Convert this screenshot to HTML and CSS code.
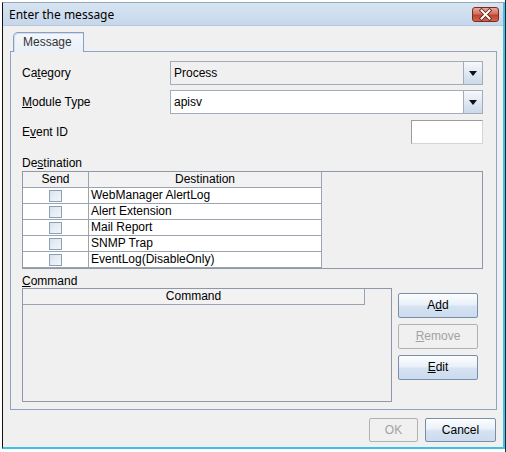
FILE: index.html
```html
<!DOCTYPE html>
<html>
<head>
<meta charset="utf-8">
<link rel="stylesheet" href="styles.css">
</head>
<body>
<div class="window">
  <div class="frame">
    <div class="titlebar">
      <span class="title">Enter the message</span>
      <div class="close">
        <svg width="27" height="15" viewBox="0 0 27 15">
          <path d="M9.5 3.5 L17.5 11.5 M17.5 3.5 L9.5 11.5" stroke="#5a1a12" stroke-width="3.6" stroke-linecap="square"/>
          <path d="M9.5 3.5 L17.5 11.5 M17.5 3.5 L9.5 11.5" stroke="#ffffff" stroke-width="2" stroke-linecap="square"/>
        </svg>
      </div>
    </div>
    <div class="content">
      <div class="tabs"><div class="tab">Message</div></div>
      <div class="panel">
        <div class="row">
          <span class="label">Ca<u>t</u>egory</span>
          <div class="combo combo-disabled"><span class="combo-text">Process</span><span class="arrow"><i></i></span></div>
        </div>
        <div class="row row-gap5">
          <span class="label"><u>M</u>odule Type</span>
          <div class="combo"><span class="combo-text">apisv</span><span class="arrow"><i></i></span></div>
        </div>
        <div class="row row-gap6 row-split">
          <span class="label">E<u>v</u>ent ID</span>
          <div class="textfield"></div>
        </div>
        <div class="section-label">De<u>s</u>tination</div>
        <div class="pane dest-pane">
          <div class="grid">
            <div class="th c-send">Send</div>
            <div class="th c-dest">Destination</div>
            <div class="td c-send"><span class="check"></span></div>
            <div class="td c-dest">WebManager AlertLog</div>
            <div class="td c-send"><span class="check"></span></div>
            <div class="td c-dest">Alert Extension</div>
            <div class="td c-send"><span class="check"></span></div>
            <div class="td c-dest">Mail Report</div>
            <div class="td c-send"><span class="check"></span></div>
            <div class="td c-dest">SNMP Trap</div>
            <div class="td c-send"><span class="check"></span></div>
            <div class="td c-dest">EventLog(DisableOnly)</div>
          </div>
        </div>
        <div class="section-label cmd-label"><u>C</u>ommand</div>
        <div class="cmd-row">
          <div class="pane cmd-pane">
            <div class="th cmd-head">Command</div>
          </div>
          <div class="side-buttons">
            <div class="btn">A<u>d</u>d</div>
            <div class="btn btn-disabled"><u>R</u>emove</div>
            <div class="btn"><u>E</u>dit</div>
          </div>
        </div>
      </div>
      <div class="footer">
        <div class="btn btn-disabled btn-ok">OK</div>
        <div class="btn btn-cancel">Cancel</div>
      </div>
    </div>
  </div>
</div>
</body>
</html>
```
FILE: styles.css
```css
* { box-sizing: border-box; }

body {
  margin: 0;
  font-family: "Liberation Sans", Arial, sans-serif;
  font-size: 12px;
  color: #000;
  background: #fff;
}

.window {
  width: 506px;
  height: 452px;
  padding: 2px 0 3px 2px;
  border-right: 1px solid #1e2a33;
  background: #ffffff;
}

.frame {
  height: 100%;
  display: flex;
  flex-direction: column;
  border-left: 1px solid #111;
  border-top: 1px solid #93a7c0;
  border-right: 2px solid #3dbfe8;
  border-bottom: 2px solid #3dbfe8;
  background: #f0f0f0;
}

.titlebar {
  height: 23px;
  flex: none;
  display: flex;
  align-items: center;
  padding-left: 6px;
  background: linear-gradient(#d8e4f1, #c6d7eb);
  border-bottom: 1px solid #b9c9dc;
}

.title {
  font-family: "Noto Sans", "DejaVu Sans", sans-serif;
  font-size: 12px;
  color: #000;
}

.close {
  margin-left: auto;
  margin-right: 4px;
  width: 27px;
  height: 15px;
  border: 1px solid #7a2c22;
  border-radius: 3px;
  background: linear-gradient(#e6a898, #d4705e 45%, #c0412f 55%, #d2664f);
  display: flex;
  overflow: hidden;
}

.close svg { display: block; margin: -1px; }

.content {
  flex: 1;
  display: flex;
  flex-direction: column;
}

.tabs {
  margin-top: 6px;
  padding-left: 10px;
  height: 19px;
  display: flex;
}

.tab {
  position: relative;
  z-index: 1;
  width: 71px;
  height: 20px;
  border: 1px solid #8aa0c3;
  border-bottom: none;
  border-top-left-radius: 5px;
  box-shadow: inset 1px 1px 0 #d2ddec;
  background: linear-gradient(#f3f7fc, #eaf0f8);
  padding-left: 9px;
  line-height: 18px;
  color: #333;
}

.panel {
  margin-left: 7px;
  width: 487px;
  border: 1px solid #8ea3c4;
  padding: 9px 13px 7px 11px;
}

.row {
  height: 24px;
  display: flex;
  align-items: center;
}

.row-gap5 { margin-top: 5px; }
.row-gap6 { margin-top: 6px; }
.row-split { justify-content: space-between; }

.label { width: 148px; flex: none; }

.combo {
  flex: 1;
  height: 24px;
  display: flex;
  border: 1px solid #a3adba;
  background: #fff;
}

.combo-disabled { background: #f0f0f0; }

.combo-text {
  flex: 1;
  padding-left: 3px;
  line-height: 22px;
}

.arrow {
  width: 19px;
  border-left: 1px solid #a3adba;
  background: linear-gradient(#f7f9fc, #dfe8f3 50%, #cbd9ea);
  display: flex;
  align-items: center;
  justify-content: center;
}

.arrow i {
  width: 0;
  height: 0;
  border-left: 4px solid transparent;
  border-right: 4px solid transparent;
  border-top: 5px solid #111;
}

.textfield {
  width: 72px;
  height: 24px;
  background: #fff;
  border: 1px solid #9c9c9c;
  border-right-color: #d4d4d4;
  border-bottom-color: #d4d4d4;
}

.section-label {
  margin-top: 12px;
  height: 14px;
  line-height: 14px;
}

.cmd-label { margin-top: 5px; }

.pane {
  border: 1px solid #8f99a6;
}

.dest-pane {
  margin-top: 1px;
  width: 461px;
  height: 98px;
}

.grid {
  width: 299px;
  display: grid;
  grid-template-columns: 66px 233px;
  grid-auto-rows: 16px;
}

.th {
  border-right: 1px solid #9aa4b1;
  border-bottom: 1px solid #9aa4b1;
  text-align: center;
  line-height: 15px;
  background: #f2f2f2;
}

.td {
  background: #fff;
  border-right: 1px solid #9aa4b1;
  border-bottom: 1px solid #9aa4b1;
  line-height: 15px;
}

.td.c-dest { padding-left: 2px; }

.td.c-send {
  display: flex;
  align-items: center;
  justify-content: center;
}

.check {
  width: 13px;
  height: 12px;
  border: 1px solid #8e9fb5;
  background: linear-gradient(135deg, #d9e3ef, #f3f7fc);
}

.cmd-row {
  display: flex;
}

.cmd-pane {
  width: 370px;
  height: 114px;
  background: #f0f0f0;
}

.cmd-head {
  width: 342px;
  height: 16px;
}

.side-buttons {
  margin-left: 6px;
  padding-top: 5px;
  display: flex;
  flex-direction: column;
  gap: 6px;
}

.btn {
  width: 80px;
  height: 25px;
  border: 1px solid #7b8ea8;
  border-radius: 2px;
  background: linear-gradient(#fcfdff, #eaf1f9 45%, #d5e2f1 55%, #cbdbee);
  text-align: center;
  line-height: 23px;
}

.btn-disabled {
  border-color: #b1b1b1;
  background: #f0f0f0;
  color: #a2a2a2;
}

.footer {
  margin-top: 8px;
  padding-right: 7px;
  display: flex;
  justify-content: flex-end;
  gap: 7px;
}

.btn-ok { width: 49px; height: 24px; line-height: 22px; }
.btn-cancel { width: 71px; height: 24px; line-height: 22px; }
```
